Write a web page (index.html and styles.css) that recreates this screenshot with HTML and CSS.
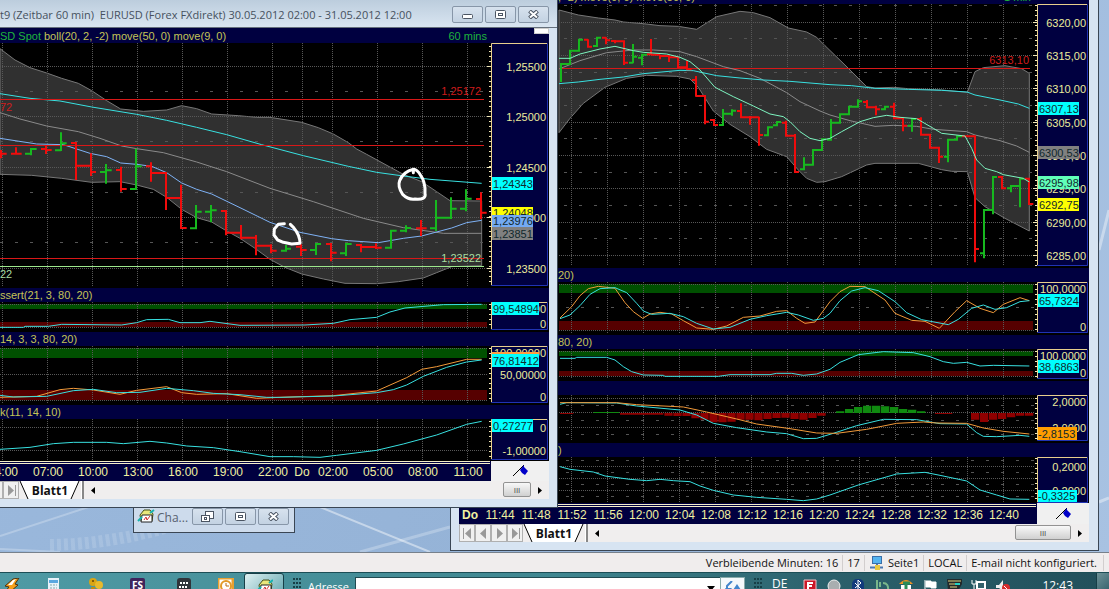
FILE: index.html
```html
<!DOCTYPE html>
<html lang="de">
<head>
<meta charset="utf-8">
<title>Charts</title>
<link rel="stylesheet" href="styles.css">
</head>
<body>
<svg class="defs" aria-hidden="true">
  <defs>
    <g id="pin"><path d="M1 12 12 1" stroke="#000" fill="none"/><path d="M8 6 12 1 12 3 16 7 13 11 10 9Z" fill="#0000c8"/></g>
    <g id="trader"><path d="M2 6 6 1 12 1 15 5 14 12 3 12Z" fill="#e9e77a" stroke="#45501c"/><path d="M4 6h10v7H3z" fill="#fff" stroke="#222"/><path d="M0 12 4 8M12 4 16 1" fill="none" stroke="#16b3b0" stroke-width="2"/><path d="M6 11 8 8 9 11 12 7" fill="none" stroke="#d03030"/></g>
    <g id="maxi" fill="none" stroke="#4b5563"><rect x=".5" y=".5" width="10" height="8" rx="1" fill="#fff"/><rect x="3.500" y="3.500" width="4" height="2"/></g>
    <g id="cross"><path d="M1.500 1 9.500 8M9.500 1 1.500 8" stroke="#4b5563" stroke-width="4"/><path d="M2 1.500 9 7.500M9 1.500 2 7.500" stroke="#fff" stroke-width="2"/></g>
  </defs>
</svg>
<main class="desktop">
  <svg class="wallpaper" aria-hidden="true"><g stroke="#fff" fill="none"><path d="M0 536 110 500M0 549 60 552" opacity=".25" stroke-width="2"/><path d="M315 505 430 552" opacity=".45" stroke-width="2"/><path d="M360 552 450 527" opacity=".25" stroke-width="3"/><path d="M50 545Q120 544 190 520" opacity=".14" stroke-width="12" stroke-dasharray="4 3"/><path d="M1099 250 1109 210M1099 502 1109 498" opacity=".4" stroke-width="3"/></g></svg>

  <section class="window window-index" aria-label="Index Chart">
    <div class="content">
      <div class="pane-title cut"><span>, -2) move(9, 0) move(50, 0)</span><span class="mins">1 min</span></div>
      <svg class="pane" height="264" viewBox="459 4 630 264" preserveAspectRatio="xMaxYMin slice">
        <g transform="scale(.33333)">
          <path class="band" d="M1677 30 1735 45 1795 54 1845 60 1870 66 1930 71 1980 77 2035 79 2090 88 2110 75 2150 50 2220 34 2260 38 2310 53 2365 84 2420 96 2450 112 2475 137 2535 195 2600 260 2625 264 2680 262 2725 266 2825 270 2902 277 2925 215 2950 203 3015 197 3065 206 3088 220V693L3015 655 2955 620 2925 593 2902 515 2855 514 2825 509 2755 490 2625 490 2600 495 2525 530 2475 545 2450 547 2420 535 2395 510 2360 470 2300 448 2250 410 2190 373 2140 333 2095 262 2070 237 2030 229 1940 226 1880 235 1815 262 1750 310 1710 355 1677 398Z"/>
        </g>
        <path class="grid" d="M571.500 4V266M607.500 4V266M643.500 4V266M679.500 4V266M715.500 4V266M751.500 4V266M787.500 4V266M823.500 4V266M859.500 4V266M895.500 4V266M931.500 4V266M967.500 4V266M1003.500 4V266M559 22.500H1034M559 55.500H1034M559 88.500H1034M559 122.500H1034M559 155.500H1034M559 188.500H1034M559 222.500H1034M559 255.500H1034"/>
        <path class="grid sparse" d="M564 5.500H1034M564 38.500H1034M564 72.500H1034M564 105.500H1034M564 138.500H1034M564 172.500H1034M564 205.500H1034M564 238.500H1034"/>
        <path class="level-red" d="M559 68.500H1030"/>
        <g transform="scale(.33333)">
          <path class="line gray" d="M1677 207 1740 182 1820 158 1900 150 1960 150 2040 155 2090 170 2170 200 2220 212 2280 235 2360 278 2400 305 2460 333 2490 345 2550 362 2625 379 2680 376 2750 379 2800 388 2900 395 2925 405 3000 422 3050 438 3088 457"/>
          <path class="line cyan" d="M1677 251 1735 246 1800 238 1870 231 1930 221 2040 211 2080 212 2150 227 2220 234 2290 240 2370 244 2490 254 2555 257 2625 265 2725 268 2825 271 2901 276 2925 285 3000 300 3055 312 3088 325"/>
          <path class="bars down" d="M1752 119H1764M1764 118V140H1776M1806 113H1818M1818 112V133M1818 121H1830M1833 123H1845M1845 120V130M1845 124H1872M1872 121V195M1872 188H1884M1941 163H1953M1953 117V165M1953 164H1980M1980 164V178M1980 168H2007M2007 165V186M2007 172H2034M2034 170V205M2034 202H2061M2061 182V208H2075M2076 240H2088M2088 228V290M2088 288H2115V373M2115 365H2127M2130 360H2142V375H2154M2211 333H2223M2223 310V352H2250M2250 348V374M2250 352H2277M2277 350V437M2277 405H2289M2346 368H2358M2358 362V407H2385M2385 402V516H2397M2589 306H2601M2601 300V322H2628M2628 317V346M2628 328H2640M2670 320H2682M2682 308V355H2709V394M2709 377H2721M2751 357H2763M2763 352V404H2790V443H2817V489M2817 470H2829M2886 409H2925V787M2925 747H2937M2994 531H3006V565H3018M3075 536H3087V612H3100"/>
          <path class="bars up" d="M1683 246V192H1710V152H1737V119H1749M1779 138H1791V113H1803M1887 188H1899M1899 190V132M1899 170H1911M1926 196V164H1941M1914 173H1926M2157 375H2169V327M2169 341H2196M2196 347V328M2196 332H2208M2292 406H2304V382H2319M2319 376H2331V366H2343M2400 508H2412V472M2412 494H2439V450H2466V418H2478M2481 419H2493V357M2493 368H2520V343H2547V320H2574V298M2574 304H2586M2643 328H2655V320H2667M2724 377H2736M2736 395V357H2748M2832 470H2844M2844 487V419H2871V409H2886M2940 760H2952M2952 775V630H2979M2979 643V531H2991M3021 565H3033M3033 577V558H3060M3060 622V536H3072"/>
          <path class="line mint" d="M1677 175 1710 175 1740 162 1800 147 1845 139 1900 152 1930 157 2000 162 2040 172 2070 185 2100 210 2145 262 2200 290 2260 318 2310 342 2350 350 2370 365 2400 395 2430 415 2460 422 2490 415 2525 395 2580 365 2620 353 2660 346 2700 352 2750 356 2800 385 2825 400 2895 408 2915 445 2930 480 2955 505 2990 515 3010 524 3070 535 3088 546"/>
        </g>
        <text class="num end red" x="1029" y="64">6313,10</text>
        <path class="ticks" d="M1036 5V266"/><path class="ticks-major" d="M1033 22.500h4m-4 33h4m-4 33h4m-4 34h4m-4 33h4m-4 33h4m-4 34h4m-4 33h4"/>
        <path class="axis" d="M1037.500 4.500H1087.500V265.500H1037.500Z"/><path class="axis-lit" d="M1087 4.500H1037.500V265"/>
        <g class="num end"><text x="1086" y="27">6320,00</text><text x="1086" y="60">6315,00</text><text x="1086" y="93">6310,00</text><text x="1086" y="127">6305,00</text><text x="1086" y="160">6300,00</text><text x="1086" y="193">6295,00</text><text x="1086" y="227">6290,00</text><text x="1086" y="260">6285,00</text></g>
        <path fill="#00ffff" d="M1038 102h41v13h-41z"/><path fill="#808080" d="M1038 146h41v13h-41z"/><path fill="#60ffb8" d="M1038 176h41v13h-41z"/><path fill="#ffff00" d="M1038 198h41v13h-41z"/>
        <g class="num tag"><text x="1039" y="113">6307,13</text><text x="1039" y="157">6300,53</text><text x="1039" y="187">6295,98</text><text x="1039" y="209">6292,75</text></g>
      </svg>
      <div class="pane-title"><span>20)</span></div>
      <svg class="pane" height="53" viewBox="459 282 630 53" preserveAspectRatio="xMaxYMin slice">
        <path class="over" d="M559 284H1033V293H559Z"/><path class="under" d="M559 321H1033V330H559Z"/>
        <path class="grid" d="M571.500 282V333M607.500 282V333M643.500 282V333M679.500 282V333M715.500 282V333M751.500 282V333M787.500 282V333M823.500 282V333M859.500 282V333M895.500 282V333M931.500 282V333M967.500 282V333M1003.500 282V333M559 284.500H1034M559 330.500H1034"/><path class="grid sparse" d="M566 307.500H1034"/>
        <g transform="translate(550 260) scale(.33333)">
          <path class="line orange" d="M30 174 65 140 90 107 115 86 145 79 195 85 225 128 250 155 278 175 300 162 330 157 365 162 400 182 440 204 490 208 530 198 580 172 630 168 680 154 710 152 740 175 765 190 795 186 840 125 870 95 900 79 945 80 1005 120 1035 160 1085 181 1125 184 1168 205 1215 155 1250 122 1290 145 1330 158 1360 133 1410 113 1438 122"/>
          <path class="line cyan" d="M30 176 60 165 90 137 120 103 150 86 195 83 230 98 260 130 280 153 305 163 360 160 400 170 440 190 490 207 540 202 600 178 650 167 710 157 745 165 790 181 820 175 840 160 870 122 905 93 945 83 985 92 1035 125 1070 158 1115 179 1195 194 1225 178 1265 145 1300 135 1335 148 1370 143 1410 125 1438 122"/>
        </g>
        <path class="ticks" d="M1036 284V332"/><path class="axis" d="M1037.500 282.500H1087.500V332.500H1037.500Z"/><path class="axis-lit" d="M1087 282.500H1037.500V332"/>
        <g class="num end"><text x="1086" y="293">100,0000</text><text x="1086" y="331">0</text></g>
        <path fill="#00ffff" d="M1038 294h41v13h-41z"/><text class="num tag" x="1039" y="305">65,7324</text>
      </svg>
      <div class="pane-title"><span>80, 20)</span></div>
      <svg class="pane" height="32" viewBox="459 349 630 32" preserveAspectRatio="xMaxYMin slice">
        <path class="over" d="M559 351H1033V356H559Z"/><path class="under" d="M559 371H1033V376H559Z"/>
        <path class="grid" d="M571.500 349V378M607.500 349V378M643.500 349V378M679.500 349V378M715.500 349V378M751.500 349V378M787.500 349V378M823.500 349V378M859.500 349V378M895.500 349V378M931.500 349V378M967.500 349V378M1003.500 349V378M559 351.500H1034M559 376.500H1034"/>
        <g transform="translate(550 260) scale(.33333)"><path class="line cyan" d="M30 295 75 295 80 292 170 292 195 300 220 320 245 335 280 345 340 346 345 349 505 349 540 344 660 344 680 340 725 340 760 346 800 342 840 328 870 307 925 284 1000 275 1090 278 1140 290 1180 305 1210 310 1250 307 1290 318 1330 316 1438 318"/></g>
        <path class="ticks" d="M1036 351V377"/><path class="axis" d="M1037.500 349.500H1087.500V378.500H1037.500Z"/><path class="axis-lit" d="M1087 349.500H1037.500V378"/>
        <g class="num end"><text x="1086" y="360">100,0000</text><text x="1086" y="377">0</text></g>
        <path fill="#00ffff" d="M1038 360h41v13h-41z"/><text class="num tag" x="1039" y="371">38,6863</text>
      </svg>
      <div class="pane-title"></div>
      <svg class="pane" height="48" viewBox="459 395 630 48" preserveAspectRatio="xMaxYMin slice">
        <path class="grid" d="M571.500 395V441M607.500 395V441M643.500 395V441M679.500 395V441M715.500 395V441M751.500 395V441M787.500 395V441M823.500 395V441M859.500 395V441M895.500 395V441M931.500 395V441M967.500 395V441M1003.500 395V441M559 398.500H1034M559 412.500H1034M559 427.500H1034"/><path class="grid sparse" d="M566 405.500H1034M566 420.500H1034M566 434.500H1034"/>
        <g transform="translate(550 260) scale(.33333)">
          <path fill="#900000" d="M30 459h40v3h-40zM210 459h130v5h-130zM343 459h25v8h-25zM370 459h25v9h-25zM397 459h25v9h-25zM424 459h25v16h-25zM451 459h25v20h-25zM478 459h25v28h-25zM505 459h25v28h-25zM532 459h25v26h-25zM559 459h25v20h-25zM586 459h25v20h-25zM613 459h25v22h-25zM640 459h25v18h-25zM667 459h25v15h-25zM694 459h25v14h-25zM721 459h25v18h-25zM748 459h25v20h-25zM775 459h25v15h-25zM802 459h25v8h-25zM1155 459h52v3h-52zM1263 459h25v20h-25zM1290 459h25v27h-25zM1317 459h25v20h-25zM1344 459h25v18h-25zM1371 459h25v13h-25zM1398 459h25v8h-25zM1425 459h25v8h-25z"/>
          <path fill="#108a10" d="M130 456h78v3h-78zM858 454h25v5h-25zM885 447h25v12h-25zM912 441h25v18h-25zM939 437h25v22h-25zM966 437h25v22h-25zM993 439h25v20h-25zM1020 441h25v18h-25zM1047 447h25v12h-25zM1074 449h25v10h-25zM1101 454h25v5h-25z"/>
          <path class="line cyan" d="M30 433 50 428 200 429 260 438 390 450 440 465 490 490 560 503 650 516 710 521 760 536 800 535 850 520 920 497 1000 478 1100 479 1170 491 1250 492 1280 518 1300 529 1340 530 1410 526 1438 529"/>
          <path class="line orange" d="M30 428 200 428 260 434 400 441 470 456 560 477 620 492 720 506 800 519 860 520 950 508 1040 490 1120 486 1160 489 1250 490 1300 504 1360 514 1438 522"/>
        </g>
        <path class="ticks" d="M1036 398V440"/><path class="axis" d="M1037.500 395.500H1087.500V440.500H1037.500Z"/><path class="axis-lit" d="M1087 395.500H1037.500V440"/>
        <g class="num end"><text x="1086" y="406">2,0000</text><text x="1086" y="432">-2,0000</text></g>
        <path fill="#ff9d00" d="M1038 427h39v13h-39z"/><text class="num tag" x="1038" y="438">-2,8153</text>
      </svg>
      <div class="pane-title"><span>)</span></div>
      <svg class="pane" height="46" viewBox="459 457 630 46" preserveAspectRatio="xMaxYMin slice">
        <path class="grid" d="M571.500 457V503M607.500 457V503M643.500 457V503M679.500 457V503M715.500 457V503M751.500 457V503M787.500 457V503M823.500 457V503M859.500 457V503M895.500 457V503M931.500 457V503M967.500 457V503M1003.500 457V503M559 466.500H1034M559 478.500H1034M559 490.500H1034"/><path class="grid sparse" d="M566 460.500H1034M566 472.500H1034M566 484.500H1034M566 496.500H1034"/>
        <g transform="translate(550 260) scale(.33333)"><path class="line cyan" d="M30 620 60 628 130 636 165 648 240 658 290 662 330 658 370 662 420 665 450 678 490 691 550 705 620 712 710 718 760 722 800 717 840 705 925 675 1040 642 1125 637 1170 646 1250 663 1290 690 1340 705 1380 717 1438 718"/></g>
        <path class="ticks" d="M1036 458V503"/><path class="axis" d="M1037.500 457.500H1087.500V502.500H1037.500Z"/><path class="axis-lit" d="M1087 457.500H1037.500V502"/>
        <g class="num end"><text x="1086" y="471">0,2000</text><text x="1086" y="495">-0,2000</text></g>
        <path fill="#00ffff" d="M1038 490h39v12h-39z"/><text class="num tag" x="1038" y="500">-0,3325</text>
      </svg>
      <svg class="pane" height="21" viewBox="459 503 630 21" preserveAspectRatio="xMaxYMin slice">
        <path fill="#000040" d="M459 503h578v21h-578z"/><path d="M459 504.500H1036M459 506.500H1036" stroke="#f5efc8"/><path fill="#f0f0f0" d="M1037 503h52v21h-52z"/>
        <g class="time"><text class="bold" x="470" y="519">Do</text><text x="500" y="519">11:44</text><text x="536" y="519">11:48</text><text x="572" y="519">11:52</text><text x="608" y="519">11:56</text><text x="644" y="519">12:00</text><text x="680" y="519">12:04</text><text x="716" y="519">12:08</text><text x="752" y="519">12:12</text><text x="788" y="519">12:16</text><text x="824" y="519">12:20</text><text x="860" y="519">12:24</text><text x="896" y="519">12:28</text><text x="932" y="519">12:32</text><text x="968" y="519">12:36</text><text x="1004" y="519">12:40</text></g>
        <use href="#pin" x="1055" y="507"/>
      </svg>
      <div class="sheetbar">
        <button class="nav" aria-label="Erstes Blatt"><svg width="15" height="15"><path d="M3.500 2V13" stroke="#999"/><path d="M11 2V13L5 7.500Z" fill="#999"/></svg></button><button class="nav" aria-label="Vorheriges Blatt"><svg width="15" height="15"><path d="M10 2V13L4 7.500Z" fill="#999"/></svg></button><button class="nav" aria-label="Nächstes Blatt"><svg width="15" height="15"><path d="M5 2V13L11 7.500Z" fill="#999"/></svg></button><button class="nav" aria-label="Letztes Blatt"><svg width="15" height="15"><path d="M11.500 2V13" stroke="#999"/><path d="M4 2V13L10 7.500Z" fill="#999"/></svg></button>
        <button class="sheet"><svg class="slants" width="66" height="18"><path d="M3 0 11 18H54L62 0Z" fill="#fff"/><path d="M3 0 11 18M62 0 54 18" stroke="#000"/></svg><span>Blatt1</span></button><span class="split"></span><button class="arrow" aria-label="Nach links"><svg width="4" height="7"><path d="M4 0V7L0 3.500Z"/></svg></button><span class="track"></span><button class="thumb wide" aria-label="Bildlauf">III</button><button class="arrow right" aria-label="Nach rechts"><svg width="4" height="7"><path d="M0 0V7L4 3.500Z"/></svg></button>
      </div>
    </div>
  </section>

  <section class="window window-mini" aria-label="Cha...">
    <svg width="18" height="16"><use href="#trader" x="1" y="1"/></svg><span class="mini-name">Cha...</span>
    <button class="winbtn" aria-label="Wiederherstellen"><svg width="13" height="12" fill="#fff" stroke="#4b5563"><rect x="4.500" y=".5" width="8" height="7"/><rect x=".5" y="4.500" width="8" height="6"/><rect x="3.500" y="6.500" width="2" height="2"/></svg></button><button class="winbtn" aria-label="Maximieren"><svg width="11" height="9"><use href="#maxi"/></svg></button><button class="winbtn" aria-label="Schließen"><svg width="11" height="9"><use href="#cross"/></svg></button>
  </section>

  <section class="window window-eurusd" aria-label="EURUSD">
    <header class="titlebar"><h1>t9 (Zeitbar 60 min)&nbsp; EURUSD (Forex FXdirekt) 30.05.2012 02:00 - 31.05.2012 12:00</h1>
      <button class="winbtn" aria-label="Minimieren"><svg width="11" height="9"><rect x=".5" y="4.500" width="10" height="4" rx="1" fill="#fff" stroke="#4b5563"/></svg></button><button class="winbtn" aria-label="Maximieren"><svg width="11" height="9"><use href="#maxi"/></svg></button><button class="winbtn" aria-label="Schließen"><svg width="11" height="9"><use href="#cross"/></svg></button>
    </header>
    <div class="content">
      <div class="pane-title top"><span class="spot">SD Spot</span><span>boll(20, 2, -2) move(50, 0) move(9, 0)</span><span class="mins">60 mins</span><span class="handle"></span></div>
      <svg class="pane" height="245" viewBox="-45 43 594 245" preserveAspectRatio="xMaxYMin slice">
        <g transform="scale(.33333)"><path class="band" d="M0 146 45 180 90 203 140 219 185 235 235 250 275 272 320 302 362 327 430 334 500 330 545 317 590 326 635 342 715 347 770 352 810 352 905 367 955 383 1000 402 1045 428 1070 447 1100 463 1210 523 1265 545 1310 575 1350 602 1445 603V797L1355 800 1310 818 1270 834 1195 845 1130 851 1035 850 970 837 905 822 855 802 810 778 765 745 720 715 675 690 635 666 590 653 545 628 500 592 460 568 410 555 360 545 275 547 185 535 95 526 0 523Z"/></g>
        <path class="grid" d="M2.500 43V286M47.500 43V286M92.500 43V286M137.500 43V286M182.500 43V286M227.500 43V286M272.500 43V286M302.500 43V286M332.500 43V286M377.500 43V286M422.500 43V286M467.500 43V286M0 66.500H488M0 116.500H488M0 167.500H488M0 217.500H488M0 268.500H488"/>
        <path class="grid sparse" d="M0 91.500H485M0 141.500H485M0 192.500H485M0 242.500H485"/>
        <g transform="scale(.33333)">
          <path class="line gray" d="M0 338 60 357 140 378 235 395 300 415 365 438 410 446 490 458 590 486 680 515 810 565 940 605 1090 655 1210 683 1330 700 1445 700"/>
          <path class="line cyan" d="M0 281 90 295 180 303 275 321 410 343 500 361 590 382 680 404 785 434 910 467 1045 499 1130 517 1210 528 1290 538 1445 550"/>
          <path class="line blue" d="M0 415 110 432 190 434 230 447 270 460 320 470 362 489 410 493 455 499 500 518 545 549 590 568 635 582 720 623 810 667 900 697 995 716 1045 722 1135 728 1210 715 1265 708 1355 684 1400 668 1445 661"/>
        </g>
        <path class="level-red" d="M0 99.500H484M0 145.500H484M0 258.500H484"/><path d="M0 266.500H484" stroke="#9de88d" stroke-width="1"/>
        <g transform="scale(.33333)">
          <path class="bars down" d="M3 450V475M3 461H20M33 461H65M48 442V463M123 447H138M138 435V462M138 450H155M213 429H228V540M228 497H273M273 460V528M273 516H288M348 510H363M363 500V575M363 567H380M438 499H453M453 487V545M453 519H498V630M498 594H543M543 554V684H560M663 633H678V706M678 698H723M723 675V718M723 713H768M768 705V766M768 737H813M813 733V760M813 752H830M888 740H903M903 733V768M903 750H920M978 732H993V784M993 758H1010M1068 735H1083V757M1083 741H1128M1128 730V747M1128 743H1145M1248 685H1280M1263 660V708M1428 597H1443M1443 577V657M1443 638H1460"/>
          <path class="bars up" d="M75 461H93M93 466V447H110M165 451H183M183 453V397M183 430H200M300 516H318M318 551V492M318 511H335M390 567H408V446M408 499H425M570 685H588V615M588 635H605M615 635H633M633 667V615M633 631H650M843 752H858M858 755V735M858 746H873M930 750H948M948 765V732H963M1020 760H1038M1038 768V732H1055M1155 743H1173V692H1190M1200 692H1218M1218 697V676M1218 684H1233M1290 685H1308M1308 693V600M1308 653H1353M1353 657V592M1353 626H1370M1380 626H1398M1398 634V568M1398 596H1415"/>
          <path class="marker" d="M853 671 835 673 823 687 822 705 833 720 850 727 875 732 900 730Q900 705 881 683L871 673M1240 518V508Q1210 515 1199 542 1192 560 1208 583 1225 600 1245 597 1280 600 1275 580 1277 545 1260 523 1252 509 1240 508"/>
        </g>
        <text class="num red" x="0" y="111">72</text><text class="num mintlabel" x="0" y="278">22</text><text class="num end red" x="481" y="95">1,25172</text><text class="num end mintlabel" x="481" y="262">1,23522</text>
        <path class="ticks" d="M490 46V285"/><path class="ticks-major" d="M487 66.500h4m-4 50h4m-4 51h4m-4 50h4m-4 51h4"/>
        <path class="axis" d="M491.500 43.500H547.500V285.500H491.500Z"/><path class="axis-lit" d="M547 43.500H491.500V285"/>
        <g class="num end"><text x="546" y="71">1,25500</text><text x="546" y="121">1,25000</text><text x="546" y="172">1,24500</text><text x="546" y="222">1,24000</text><text x="546" y="273">1,23500</text></g>
        <path fill="#ffff00" d="M492 207h41v9h-41z"/><text class="num tag" x="493" y="217">1,24048</text><path fill="#00ffff" d="M492 177h41v13h-41z"/><path fill="#74aaf2" d="M492 215h41v12h-41z"/><path fill="#808080" d="M492 227h41v13h-41z"/>
        <g class="num tag"><text x="493" y="188">1,24343</text><text x="493" y="225">1,23976</text><text x="493" y="238">1,23851</text></g>
      </svg>
      <div class="pane-title"><span>ssert(21, 3, 80, 20)</span></div>
      <svg class="pane" height="30" viewBox="-45 302 594 30" preserveAspectRatio="xMaxYMin slice">
        <path class="over" d="M0 304H487V309H0Z"/><path class="under" d="M0 322H487V327H0Z"/>
        <path class="grid" d="M2.500 302V330M47.500 302V330M92.500 302V330M137.500 302V330M182.500 302V330M227.500 302V330M272.500 302V330M302.500 302V330M332.500 302V330M377.500 302V330M422.500 302V330M467.500 302V330M0 304.500H488M0 327.500H488"/>
        <g transform="translate(0 280) scale(.33333)"><path class="line cyan" d="M0 142 70 142 75 139 145 139 185 133 365 135 410 128 440 119 505 118 540 128 600 128 630 124 720 136 915 135 1000 130 1050 119 1130 112 1170 96 1215 84 1330 74 1445 73"/></g>
        <path class="ticks" d="M490 304V329"/><path class="axis" d="M491.500 302.500H547.500V329.500H491.500Z"/><path class="axis-lit" d="M547 302.500H491.500V329"/>
        <g class="num end"><text x="546" y="313">100,00000</text><text x="546" y="328">0</text></g><path fill="#00ffff" d="M492 302h47v13h-47z"/><text class="num tag" x="493" y="313">99,54894</text>
      </svg>
      <div class="pane-title"><span>14, 3, 3, 80, 20)</span></div>
      <svg class="pane" height="59" viewBox="-45 346 594 59" preserveAspectRatio="xMaxYMin slice">
        <path class="over" d="M0 348H487V358H0Z"/><path class="under" d="M0 390H487V400H0Z"/>
        <path class="grid" d="M2.500 346V403M47.500 346V403M92.500 346V403M137.500 346V403M182.500 346V403M227.500 346V403M272.500 346V403M302.500 346V403M332.500 346V403M377.500 346V403M422.500 346V403M467.500 346V403M0 348.500H488M0 374.500H488M0 400.500H488"/>
        <g transform="translate(0 280) scale(.33333)">
          <path class="line orange" d="M0 352 110 349 180 329 220 325 280 330 360 343 410 331 500 320 545 338 590 343 680 341 770 355 840 352 1000 347 1130 333 1220 293 1265 268 1310 260 1400 238 1445 238"/>
          <path class="line cyan" d="M0 346 40 351 140 349 220 332 280 328 350 338 420 337 500 325 580 332 640 340 720 344 800 352 840 352 1000 348 1130 338 1180 329 1220 315 1270 289 1340 262 1400 246 1445 240"/>
        </g>
        <path class="ticks" d="M490 348V402"/><path class="axis" d="M491.500 346.500H547.500V402.500H491.500Z"/><path class="axis-lit" d="M547 346.500H491.500V402"/>
        <g class="num end"><text x="546" y="357">100,00000</text><text x="546" y="379">50,00000</text><text x="546" y="401">0</text></g><path fill="#ff9d40" d="M492 352h47v2h-47z"/><path fill="#00ffff" d="M492 354h47v13h-47z"/><text class="num tag" x="493" y="365">76,81412</text>
      </svg>
      <div class="pane-title"><span>k(11, 14, 10)</span></div>
      <svg class="pane" height="42" viewBox="-45 419 594 42" preserveAspectRatio="xMaxYMin slice">
        <path class="grid" d="M2.500 419V461M47.500 419V461M92.500 419V461M137.500 419V461M182.500 419V461M227.500 419V461M272.500 419V461M302.500 419V461M332.500 419V461M377.500 419V461M422.500 419V461M467.500 419V461M0 427.500H488M0 450.500H488"/>
        <g transform="translate(0 280) scale(.33333)"><path class="line cyan" d="M0 508 90 502 160 491 220 487 320 487 370 491 450 484 500 489 560 498 640 503 720 515 810 530 880 530 960 532 1010 526 1130 511 1210 492 1310 465 1400 433 1445 424"/></g>
        <path class="ticks" d="M490 421V460"/><path class="axis" d="M491.500 419.500H547.500V459.500H491.500Z"/><path class="axis-lit" d="M547 419.500H491.500V459"/>
        <g class="num end"><text x="546" y="432">0</text><text x="546" y="455">-1,00000</text></g><path fill="#00ffff" d="M492 419h41v13h-41z"/><text class="num tag" x="493" y="430">0,27277</text>
      </svg>
      <svg class="pane" height="20" viewBox="-45 461 594 20" preserveAspectRatio="xMaxYMin slice">
        <path fill="#000040" d="M-45 461h536v20h-536z"/><path d="M-45 461.500H490M-45 463.500H490" stroke="#f5efc8"/><path fill="#f0f0f0" d="M491 461h58v20h-58z"/>
        <g class="time"><text x="3" y="476">04:00</text><text x="48" y="476">07:00</text><text x="93" y="476">10:00</text><text x="138" y="476">13:00</text><text x="183" y="476">16:00</text><text x="228" y="476">19:00</text><text x="273" y="476">22:00</text><text x="302" y="476">Do</text><text x="333" y="476">02:00</text><text x="378" y="476">05:00</text><text x="423" y="476">08:00</text><text x="468" y="476">11:00</text></g>
        <use href="#pin" x="512" y="464"/>
      </svg>
      <div class="sheetbar">
        <button class="nav" aria-label="Erstes Blatt"></button><button class="nav" aria-label="Vorheriges Blatt"></button><button class="nav" aria-label="Nächstes Blatt"></button><button class="nav" aria-label="Letztes Blatt"><svg width="15" height="15"><path d="M11.500 2V13" stroke="#999"/><path d="M4 2V13L10 7.500Z" fill="#999"/></svg></button>
        <button class="sheet"><svg class="slants" width="66" height="18"><path d="M3 0 11 18H54L62 0Z" fill="#fff"/><path d="M3 0 11 18M62 0 54 18" stroke="#000"/></svg><span>Blatt1</span></button><span class="split"></span><button class="arrow" aria-label="Nach links"><svg width="4" height="7"><path d="M4 0V7L0 3.500Z"/></svg></button><span class="track"></span><button class="thumb" aria-label="Bildlauf">III</button><button class="arrow right" aria-label="Nach rechts"><svg width="4" height="7"><path d="M0 0V7L4 3.500Z"/></svg></button>
      </div>
    </div>
  </section>
</main>

<footer class="statusbar">
  <span>Verbleibende Minuten: 16</span><span>17</span><span class="page"><svg width="15" height="14"><rect x="3.500" y=".5" width="9" height="7" fill="#55b4f0" stroke="#3a6fa8"/><path d="M8 8v3M1 11.500h13" stroke="#4a78b0" stroke-width="2"/><rect x="6" y="9" width="5" height="5" fill="#e8c840"/></svg>Seite1</span><span>LOCAL</span><span class="mail">E-mail nicht konfiguriert.</span>
</footer>
<nav class="taskbar" aria-label="Taskleiste">
  <div class="launch">
    <button aria-label="Winamp"><svg width="16" height="14"><path d="M1 8 9 1l6-1-4 6 3 1-8 7H1l4-5z" fill="#f5a01c" stroke="#4b3010"/><path d="M4 7 9 2l3-1-4 6z" fill="#fff"/></svg></button>
    <button aria-label="Rechner"><svg width="12" height="14"><rect width="11" height="14" fill="#e8f2fa"/><rect x="1" y="2" width="9" height="3" fill="#5ba7e0"/><path d="M2 7h7M2 10h7" stroke="#8aa" stroke-dasharray="2 1"/></svg></button>
    <button aria-label="Schlüssel"><svg width="16" height="14"><circle cx="5" cy="4" r="4" fill="#d9a514"/><circle cx="11" cy="7" r="4" fill="#e8b92c"/><circle cx="5" cy="3" r="1" fill="#664400"/><path d="M3 9h4v5H3z" fill="#c08b10"/></svg></button>
    <button class="fs">FS</button>
    <button aria-label="BlackBerry"><svg width="16" height="14"><rect x="1" width="14" height="14" rx="3" fill="#30343a"/><path d="M4 5h9M3 9h9" stroke="#fff" stroke-width="2" stroke-dasharray="2 1"/></svg></button>
    <button aria-label="Outlook"><svg width="16" height="14"><rect width="15" height="14" fill="#fff" stroke="#e8a030" stroke-width="3"/><circle cx="8" cy="8" r="5" fill="#fff" stroke="#e39a28" stroke-width="2"/><path d="M8 5v3h3" fill="none" stroke="#b86d10"/></svg></button>
    <button class="active" aria-label="Charts"><svg width="17" height="14"><use href="#trader" x="1"/></svg></button>
  </div>
  <svg class="grip" width="9" height="12"><path d="M1 1v11M4 1v11M7 1v11" stroke="#173f47" stroke-width="2" stroke-dasharray="2 2"/></svg>
  <label class="address-label" for="address">Adresse</label>
  <input id="address" class="address" type="text">
  <button class="drop" aria-label="Adressliste"><svg width="8" height="5"><path d="M0 0H8L4 5Z"/></svg></button>
  <button class="go" aria-label="Aktualisieren"><svg width="16" height="12"><path d="M7 0 2 5v4h3L4 12" fill="none" stroke="#4285cc" stroke-width="2"/><path d="m0 7 3 5 4-5zM8 9l4-6 4 6h-2v3h-4V9z" fill="#4285cc"/></svg></button>
  <svg class="grip" width="9" height="12"><path d="M1 1v11M4 1v11M7 1v11" stroke="#173f47" stroke-width="2" stroke-dasharray="2 2"/></svg>
  <span class="lang">DE</span>
  <div class="tray">
    <svg width="15" height="12"><path d="M1 1h12v11H1z" fill="#cb1626" stroke="#f1c1c5"/><path d="M10 4H5v8M5 7h4" stroke="#fff" stroke-width="2" fill="none"/></svg>
    <svg width="15" height="12"><circle cx="7" cy="7" r="6" fill="#a9aeb0" stroke="#eee"/></svg>
    <svg width="15" height="12"><rect x="1" width="12" height="14" rx="5" fill="#123a7c"/><path d="M4 4 10 10M7 12V1l3 3-6 5" stroke="#fff" fill="none"/></svg>
    <svg width="15" height="12"><path d="M2 1v9l5 2M8 4q6 0 5 8M5 3v5" stroke="#79b68b" stroke-width="2" fill="none"/></svg>
    <svg width="15" height="12"><path d="M0 5Q7-3 14 5z" fill="#e89023"/><path d="M2 6h10v6H2z" fill="#fff"/><path d="M4 4h7M7 4v8" stroke="#2a8c58" stroke-width="3"/></svg>
    <svg width="15" height="12"><path d="M2 1v11M3 2h5v1h5v6H8V8H3z" fill="#fff" stroke="#fff"/></svg>
    <svg width="15" height="12"><path d="M0 0h15v5l-4 7H1z" fill="#23292b"/><path d="M1 2h13M2 5h8M3 8h7" stroke="#ddd480"/><path d="M8 5h5" stroke="#22d2c3" stroke-width="2"/></svg>
    <svg width="15" height="12"><path d="M1 1v4h4V1M3 5v7" fill="none" stroke="#fff"/><path d="M6 3h8v7H6z" fill="#33616b" stroke="#fff" stroke-width="2"/></svg>
    <svg width="15" height="12"><path d="M1 6h3l4-5v11L4 9H1z" fill="#eee"/><circle cx="11" cy="9" r="4" fill="#d82c2c"/><path d="m9 7 4 4" stroke="#fff"/></svg>
  </div>
  <time class="clock">12:43</time>
  <button class="show-desktop" aria-label="Desktop anzeigen"></button>
</nav>
</body>
</html>
```
FILE: styles.css
```css
* { box-sizing: border-box; }
html, body { height: 100%; }
body { margin: 0; display: flex; flex-direction: column; overflow: hidden; font: 12px "Open Sans", "Noto Sans", sans-serif; color: #111; }
button { margin: 0; padding: 0; border: 0; background: none; font: inherit; color: inherit; display: flex; align-items: center; justify-content: center; flex: none; }
svg { display: block; flex: none; }
.defs { position: absolute; width: 0; height: 0; }

.desktop { position: relative; flex: 1; min-height: 0; overflow: hidden; background: linear-gradient(100deg, #9ab8dc, #94b2d6 60%, #a8c2e2); }
.wallpaper { position: absolute; inset: 0; width: 100%; height: 100%; }

.window { position: absolute; background: #d7e4f2; border: 1px solid #3a4654; border-top: 0; }
.window-index { top: 0; left: 450px; right: 10px; padding: 0 9px 8px 8px; }
.window-eurusd { top: 0; left: -54px; width: 612px; padding: 0 8px 8px 8px; }
.window-mini { top: 508px; left: 133px; display: flex; align-items: flex-start; gap: 2px; padding: 0 5px 5px 3px; background: #cddbec; }
.mini-name { width: 33px; line-height: 19px; color: #56616f; }

.titlebar { display: flex; gap: 2px; height: 28px; padding: 6px 0 0 45px; margin: 0 -8px 0 0; background: linear-gradient(#bccddd, #d9e5f1); border-bottom: 1px solid #65707c; }
.titlebar h1 { flex: 1; margin: 0; font-family: "Open Sans", sans-serif; font-size: 11px; font-weight: 400; line-height: 17px; white-space: nowrap; color: #46515e; }
.titlebar .winbtn:last-child { margin-right: 8px; }
.winbtn { width: 31px; height: 17px; border: 1px solid #8796a8; border-radius: 2px; background: linear-gradient(#d7e2ee, #c3d2e2); }

.content { background: #000; }
.pane { width: 100%; }
.pane-title { display: flex; align-items: center; height: 14px; padding-left: 45px; overflow: hidden; white-space: nowrap; background: #000040; color: #c4c456; font: 11px/14px "Liberation Sans", sans-serif; }
.pane-title.top { height: 15px; gap: 3px; }
.pane-title.cut { height: 4px; align-items: flex-end; }
.window-index .pane-title { padding-left: 99px; }
.spot { color: #1fb53c; }
.mins { margin-left: auto; margin-right: 58px; color: #1fb53c; }
.top .mins { margin-right: 44px; }
.handle { width: 15px; height: 6px; background: #fff; border: 1px solid #ccc; align-self: flex-start; }

.band { fill: #303030; stroke: #777; stroke-width: 1; vector-effect: non-scaling-stroke; }
.grid { fill: none; stroke: #585858; stroke-dasharray: 1 1; }
.grid.sparse { stroke: #555; stroke-dasharray: 3 12; }
.line { fill: none; stroke-width: 1; vector-effect: non-scaling-stroke; }
.gray { stroke: #8a8a8a; }
.cyan { stroke: #38e0e0; }
.blue { stroke: #7fb2f5; }
.mint { stroke: #7df5c0; }
.orange { stroke: #f29a3a; }
.bars { fill: none; stroke-width: 6; }
.down { stroke: #f00c0c; }
.up { stroke: #17b91f; }
.marker { fill: none; stroke: #fff; stroke-width: 9; stroke-linejoin: round; stroke-linecap: round; }
.level-red { stroke: #d81818; stroke-width: 1; }
.over { fill: #005000; }
.under { fill: #560000; }
.axis { fill: #000040; stroke: #2033b4; }
.axis-lit { fill: none; stroke: #e8cf8c; }
.ticks { stroke: #f2e8b8; stroke-width: 2; stroke-dasharray: 1 4; }
.ticks-major { stroke: #f2e8b8; }
.num { fill: #ecec9c; font: 11px "Liberation Sans", sans-serif; }
.end { text-anchor: end; }
.num.red { fill: #cf1c1c; }
.num.mintlabel { fill: #a8dca0; }
.num.tag { fill: #10282c; }
.time { fill: #f0f0a0; text-anchor: middle; font: 12px "Liberation Sans", sans-serif; }
.bold { font-weight: 700; }

.sheetbar { display: flex; align-items: stretch; height: 18px; background: #f0eeee; font-size: 12px; }
.nav { width: 16px; border: 1px solid #b0b0b0; background: #f0f0f0; }
.sheet { display: grid; width: 62px; font-weight: 700; }
.sheet > * { grid-area: 1 / 1; }
.split { width: 3px; border-right: 2px solid #888; background: #fff; }
.arrow { width: 17px; }
.arrow.right { width: 18px; }
.track { flex: 1; }
.thumb { width: 28px; height: 15px; margin-top: 1px; border: 1px solid #929292; border-radius: 2px; background: linear-gradient(#f8f8f8, #d0d0d0); font-size: 8px; color: #444; }
.thumb.wide { width: 56px; }

.statusbar { flex: none; display: flex; justify-content: flex-end; align-items: center; height: 20px; padding-right: 5px; background: #f0eded; border-top: 1px solid #77818c; box-shadow: 0 -1px #fff; font-size: 11px; white-space: nowrap; }
.statusbar span { padding: 0 4px 0 4px; border-right: 1px solid #d2cece; line-height: 16px; }
.statusbar .page { display: flex; align-items: center; gap: 4px; }
.statusbar .mail { padding-right: 6px; }

.taskbar { flex: none; display: flex; align-items: flex-start; height: 17px; overflow: hidden; border-top: 1px solid #1c4e56; background: linear-gradient(90deg, #4f9aa4, #3f8791 50%, #2b606b 75%, #22505b); }
.launch { display: flex; }
.launch button { width: 42px; height: 26px; padding: 5px 18px 0 0; align-items: flex-start; }
.launch .active { width: 40px; margin-left: -12px; padding: 5px 0 0; border: 1px solid #173f47; border-radius: 3px; background: linear-gradient(135deg, #dff1f2, #5fa5ae); }
.launch .fs { width: 15px; margin: 5px 27px 0 4px; height: 16px; padding: 0; border-radius: 2px; background: #40245c; color: #fff; font-size: 10px; font-weight: 700; line-height: 14px; }
.grip { margin-top: 4px; margin-left: 9px; }
.address-label { margin: 5px 6px 0 6px; color: #fff; font-size: 11px; line-height: 17px; }
.address { flex: 1; min-width: 40px; height: 24px; margin-top: 4px; border: 1px solid #204a50; border-right: 0; background: #fff; }
.drop { width: 18px; height: 24px; margin-top: 4px; padding-top: 8px; align-items: flex-start; background: #fff; border-top: 1px solid #204a50; }
.go { width: 25px; height: 24px; margin-top: 4px; padding-top: 3px; align-items: flex-start; background: #f4f8fb; border: 1px solid #8aa; }
.lang { margin: 2px 16px 0 9px; color: #fff; line-height: 17px; }
.tray { display: flex; gap: 9px; padding-top: 6px; }
.clock { margin: 4px 23px 0 32px; color: #fff; line-height: 17px; }
.show-desktop { width: 13px; height: 24px; border-left: 1px solid #173f47; background: linear-gradient(135deg, #6d9298, #2b5963); }
```
